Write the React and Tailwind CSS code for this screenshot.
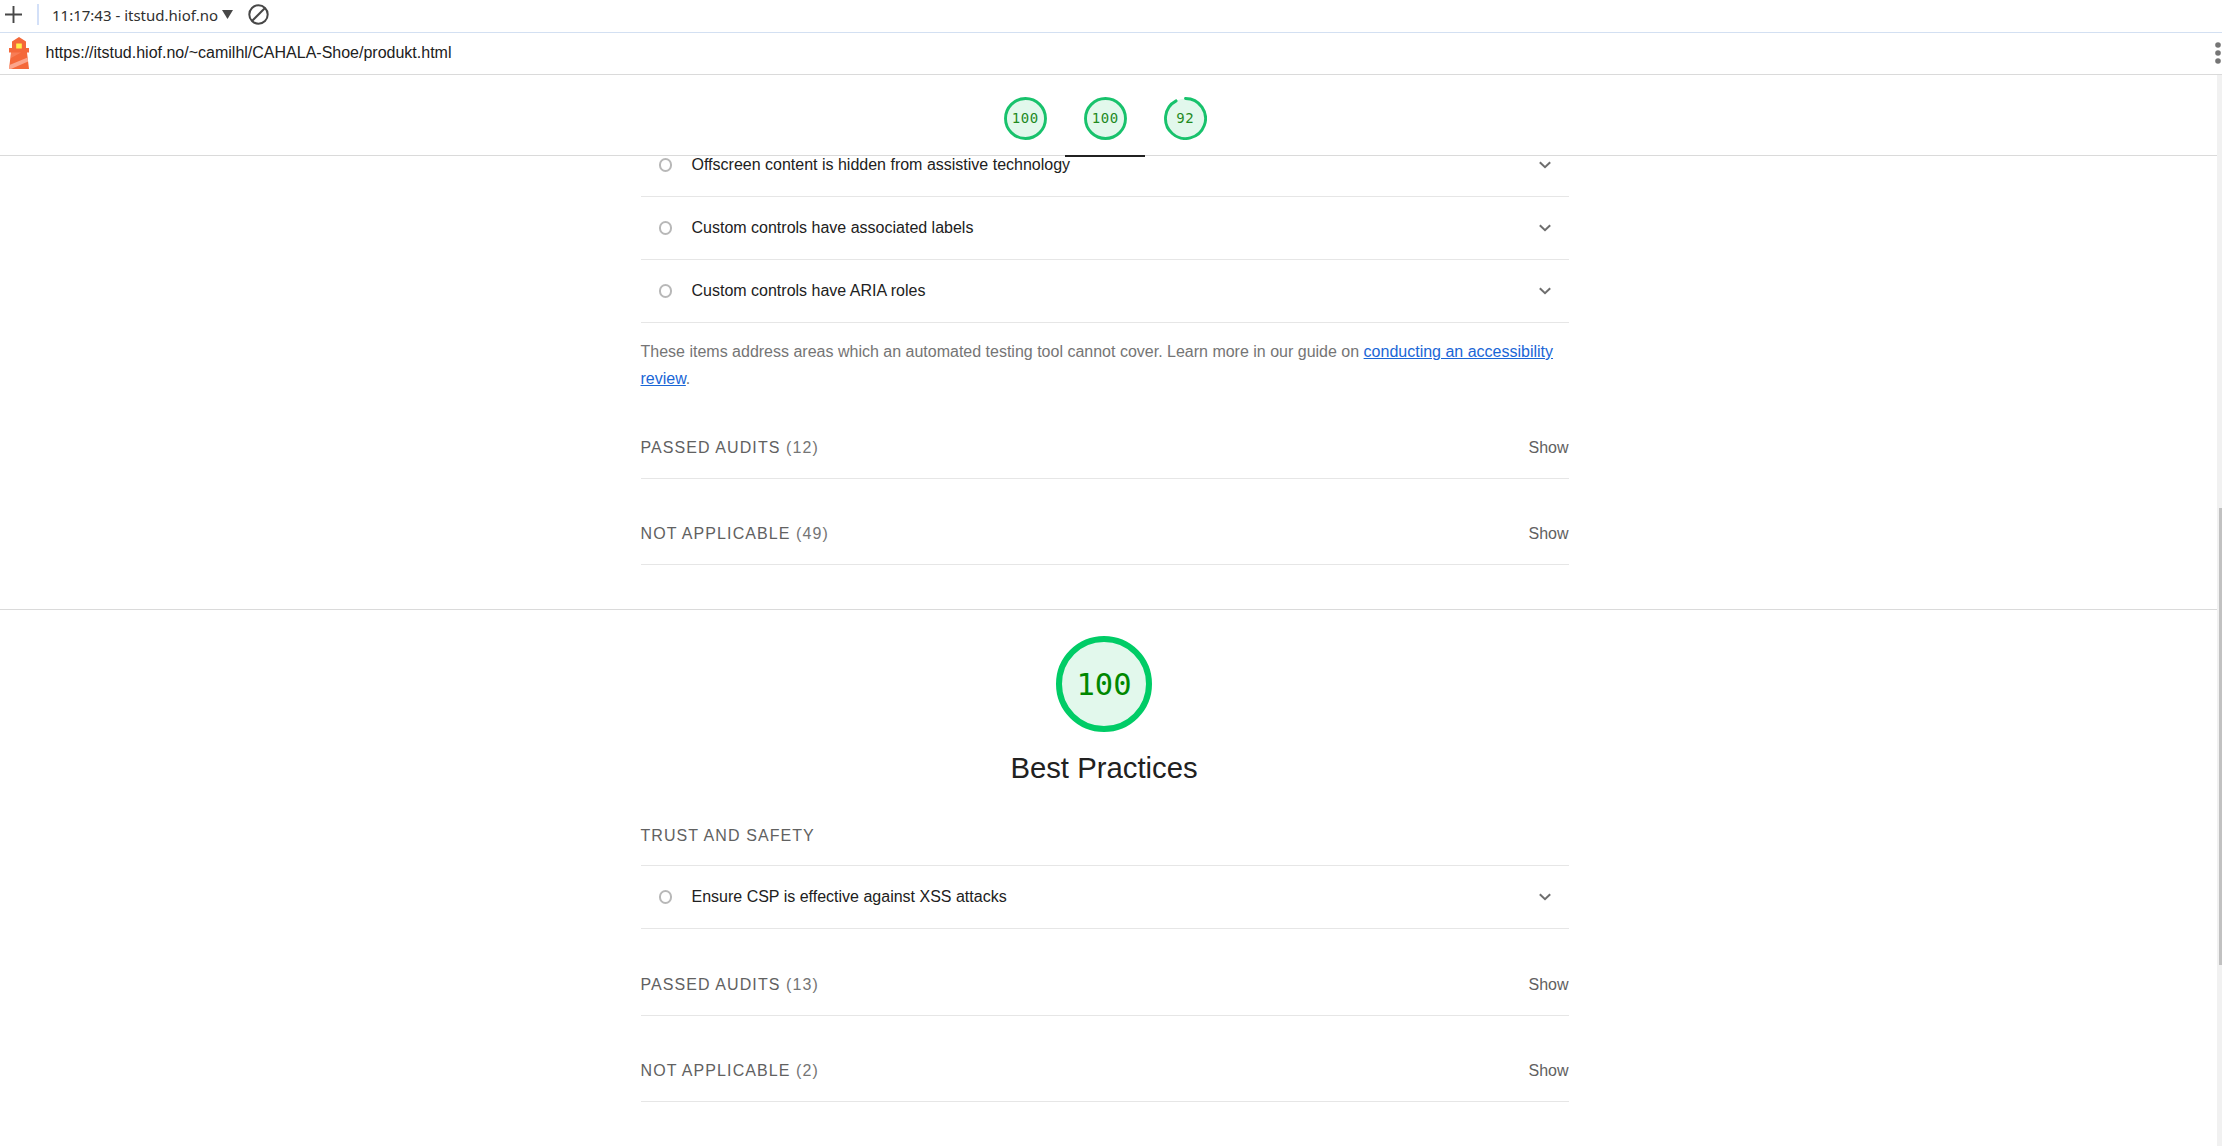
function LighthouseLogo() {
  return (
    <svg className="h-[32px] w-[20px]" viewBox="0 0 20 32">
      <path d="M10 0L17 4.500V11H20V15.500H18L20 32H0L2 15.500H0V11H3V4.500Z" fill="#f4683a" />
      <rect x="7.200" y="6.500" width="5.600" height="5" fill="#fff04a" />
      <path d="M1.900 16.500L2 15.500H12L1.200 21.500Z" fill="#fba58c" opacity="0.350" />
      <path d="M0.500 28L18.600 20.500L19.100 24.500L2 32H0Z" fill="#fba58c" />
    </svg>
  );
}

function Toolbar() {
  return (
    <div className="flex h-[33px] items-center border-b border-[#d3e0f2] pb-[3px]">
      <svg className="ml-[5px] h-[17px] w-[17px]" viewBox="0 0 17 17" stroke="#474747" strokeWidth="1.900">
        <path d="M0 8.500H17M8.500 0V17" />
      </svg>
      <div className="ml-[15px] h-[21px] w-[2px] bg-[#d3e0f8]" />
      <span className="ml-[13px] w-[167px] whitespace-nowrap font-['Noto_Sans',sans-serif] text-[15px] leading-5 text-[#303030]">
        11:17:43 - itstud.hiof.no
      </span>
      <svg className="ml-[3px] -mt-px h-[9px] w-[11px]" viewBox="0 0 11 9" fill="#474747">
        <path d="M0 0H11L5.500 9Z" />
      </svg>
      <svg className="ml-[15px] h-[21px] w-[21px]" viewBox="0 0 21 21" fill="none" stroke="#474747" strokeWidth="2">
        <circle cx="10.500" cy="10.500" r="9.200" />
        <path d="M4 17L17 4" />
      </svg>
    </div>
  );
}

function UrlBar() {
  return (
    <div className="flex h-[42px] items-center border-b border-[#dadada] pb-[2px]">
      <div className="ml-[9px] flex pt-px">
        <LighthouseLogo />
      </div>
      <span className="ml-[16.500px] text-[16px] text-[#212121]">
        https://itstud.hiof.no/~camilhl/CAHALA-Shoe/produkt.html
      </span>
      <svg className="ml-auto mr-[1px] h-[22px] w-[6px]" viewBox="0 0 6 22" fill="#757575">
        <circle cx="3" cy="3" r="2.800" />
        <circle cx="3" cy="11" r="2.800" />
        <circle cx="3" cy="19" r="2.800" />
      </svg>
    </div>
  );
}

function MiniGauge({ score, active }) {
  return (
    <div className="flex h-[82px] w-[80px] flex-col items-center">
      <div className="mt-[21.500px] grid h-[43px] w-[43px] place-items-center">
        <svg className="col-start-1 row-start-1 h-[43px] w-[43px]" viewBox="0 0 43 43">
          <circle cx="21.500" cy="21.500" r="20" fill="#e2f8ec" />
          {score === 100 ? (
            <circle cx="21.500" cy="21.500" r="20" fill="none" stroke="#18c26c" strokeWidth="2.900" />
          ) : (
            <path
              d="M21.500 1.500A20 20 0 1 1 12.100 3.850"
              fill="none"
              stroke="#18c26c"
              strokeWidth="2.900"
              strokeLinecap="round"
            />
          )}
        </svg>
        <span className="col-start-1 row-start-1 pl-[0.500px] font-['DejaVu_Sans_Mono',monospace] text-[14px] leading-4 tracking-[0.500px] text-[#1f8a1f]">
          {score}
        </span>
      </div>
      {active && <div className="mt-auto h-[2px] w-full bg-[#212121]" />}
    </div>
  );
}

function AuditRow({ title }) {
  return (
    <div className="flex h-[63px] items-center border-b border-[#e6e6e6]">
      <div className="ml-[18px] h-[13.500px] w-[13.500px] rounded-full border-2 border-[#b8b8b8]" />
      <span className="ml-[19.500px] text-[16px] text-[#212121]">{title}</span>
      <svg
        className="ml-auto mr-[17.500px] -mt-px h-[8px] w-[12px]"
        viewBox="0 0 12 8"
        fill="none"
        stroke="#6e6e6e"
        strokeWidth="2"
      >
        <path d="M0.800 1.200L6 6.200L11.200 1.200" />
      </svg>
    </div>
  );
}

function ClumpHeader({ title, count, first }) {
  return (
    <div
      className={
        first
          ? "flex h-[87px] items-center justify-between border-b border-[#e6e6e6] pt-[25px] text-[16px]"
          : "flex h-[86px] items-center justify-between border-b border-[#e6e6e6] pt-[24px] text-[16px]"
      }
    >
      <span className="uppercase tracking-[1.080px] text-[#616161]">
        {title} <span className="text-[#757575]">({count})</span>
      </span>
      <span className="text-[#616161]">Show</span>
    </div>
  );
}

const MANUAL_AUDITS = [
  "Offscreen content is hidden from assistive technology",
  "Custom controls have associated labels",
  "Custom controls have ARIA roles",
];

export default function App() {
  return (
    <div className="flex h-[1146px] w-[2222px] flex-col overflow-hidden bg-white font-['Liberation_Sans',Arial,sans-serif]">
      <Toolbar />
      <UrlBar />
      <div className="flex min-h-0 flex-1">
        <div className="flex min-w-0 flex-1 flex-col">
          <header className="z-10 flex h-[81px] shrink-0 justify-center border-b border-[#dadada] bg-white pr-[7px]">
            <MiniGauge score={100} />
            <MiniGauge score={100} active />
            <MiniGauge score={92} />
          </header>
          <main className="flex-1 overflow-hidden">
            <section className="border-b border-[#dadada] pb-[44px] pr-[8px]">
              <div className="mx-auto -mt-[22px] w-[928px]">
                {MANUAL_AUDITS.map((title) => (
                  <AuditRow key={title} title={title} />
                ))}
                <p className="pt-[15px] text-[16px] leading-[27px] text-[#757575]">
                  These items address areas which an automated testing tool cannot cover. Learn more in our guide on{" "}
                  <a className="text-[#1a66d6] underline">
                    conducting an accessibility
                    <br />
                    review
                  </a>
                  .
                </p>
                <ClumpHeader title="Passed audits" count={12} first />
                <ClumpHeader title="Not applicable" count={49} />
              </div>
            </section>
            <section className="pr-[8px] pt-[26px]">
              <div className="mx-auto flex w-[928px] flex-col">
                <div className="mr-px grid h-[96px] w-[96px] place-items-center self-center rounded-full border-[6.500px] border-[#0c6] bg-[#e2f8ec]">
                  <span className="pt-[2px] font-['DejaVu_Sans_Mono',monospace] text-[30.500px] leading-9 text-[#080]">
                    100
                  </span>
                </div>
                <h2 className="mr-px mt-[18px] text-center text-[29.300px] leading-9 text-[#212121]">Best Practices</h2>
                <div className="mt-[19px] flex h-[61px] items-center border-b border-[#e6e6e6] pt-px text-[16px] uppercase tracking-[1.080px] text-[#616161]">
                  Trust and safety
                </div>
                <AuditRow title="Ensure CSP is effective against XSS attacks" />
                <ClumpHeader title="Passed audits" count={13} first />
                <ClumpHeader title="Not applicable" count={2} />
              </div>
            </section>
          </main>
        </div>
        <div className="w-[5px] shrink-0 bg-[#f1f1f1] pl-[2px] pt-[433px]">
          <div className="h-[457px] bg-[#c1c1c1]" />
        </div>
      </div>
    </div>
  );
}
